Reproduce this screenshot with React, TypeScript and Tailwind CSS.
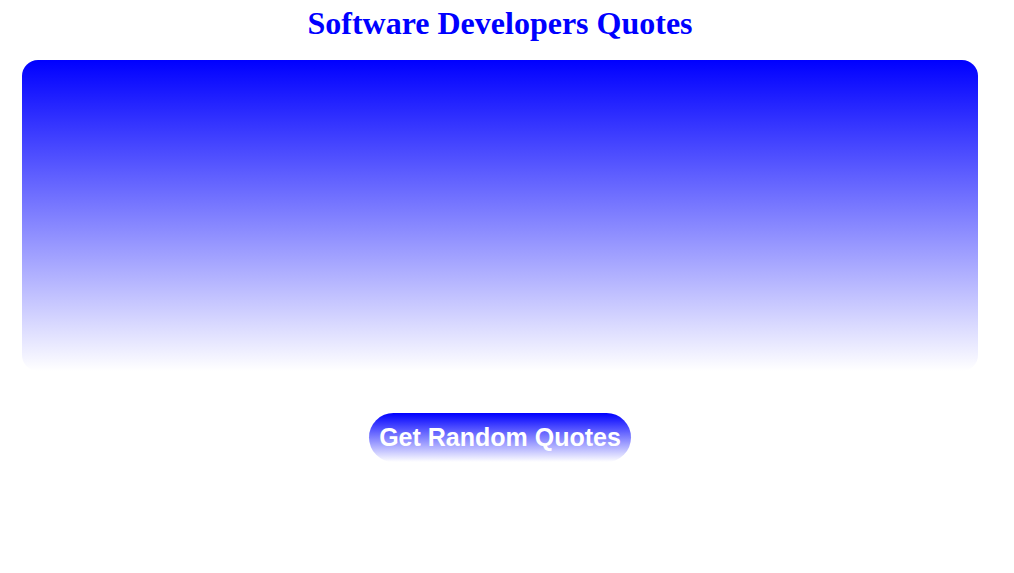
export default function App() {
  return (
    <div className="w-[1000px] bg-white">
      <h1 className="pt-[5px] text-center text-[32px] font-bold leading-[36px] text-[#0000ff] [font-family:'Liberation_Serif',serif]">
        Software Developers Quotes
      </h1>
      <div className="ml-[22px] mt-[19px] h-[311px] w-[956px] rounded-2xl bg-[linear-gradient(to_bottom,#0000ff,#ffffff)]" />
      <div className="mt-[42px] flex justify-center">
        <button className="h-[49px] rounded-full bg-[linear-gradient(to_bottom,#0000ff,#ffffff)] px-[10px] text-[25px] font-bold text-white [font-family:'Liberation_Sans',sans-serif]">
          Get Random Quotes
        </button>
      </div>
    </div>
  );
}
